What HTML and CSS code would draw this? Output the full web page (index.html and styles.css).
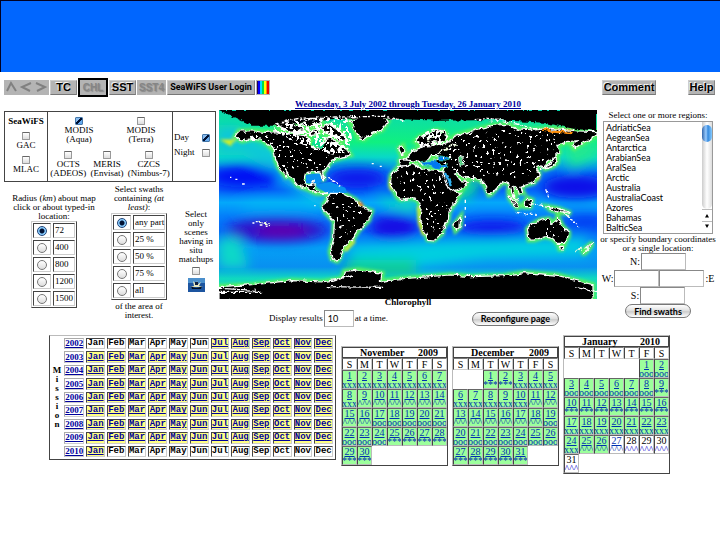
FILE: index.html
```
<!DOCTYPE html>
<html lang="en">
<head>
<meta charset="utf-8">
<title>Ocean color level 1 and 2 browser</title>
<link rel="stylesheet" href="styles.css">
</head>
<body>
<header class="banner"></header>

<nav class="toolbar">
  <div class="arrows">
    <button type="button" class="tool faded" aria-label="Up"><svg viewBox="0 0 14 14"><path d="M3 11 7 3l5 8"/></svg></button>
    <button type="button" class="tool faded" aria-label="Back"><svg viewBox="0 0 14 14"><path d="M12 3 3 7l8 4"/></svg></button>
    <button type="button" class="tool faded" aria-label="Forward"><svg viewBox="0 0 14 14"><path d="M2 3l9 4-8 4"/></svg></button>
  </div>
  <button type="button" class="tool raised wide">TC</button>
  <button type="button" class="tool faded current">CHL</button>
  <button type="button" class="tool raised wide">SST</button>
  <button type="button" class="tool faded wide">SST4</button>
  <button type="button" class="tool login">SeaWiFS User Login</button>
  <button type="button" class="tool rainbow" aria-label="Palette"><span></span></button>
  <button type="button" class="tool raised comment">Comment</button>
  <button type="button" class="tool raised help">Help</button>
</nav>

<form class="main">
  <section class="left">
    <div class="sensors">
      <div class="group seawifs">
        <b>SeaWiFS</b>
        <label><input type="checkbox">GAC</label>
        <label><input type="checkbox">MLAC</label>
      </div>
      <div class="group others">
        <div class="line">
          <label><input type="checkbox" checked>MODIS<br>(Aqua)</label>
          <label><input type="checkbox">MODIS<br>(Terra)</label>
        </div>
        <div class="line">
          <label><input type="checkbox">OCTS<br>(ADEOS)</label>
          <label><input type="checkbox">MERIS<br>(Envisat)</label>
          <label><input type="checkbox">CZCS<br>(Nimbus-7)</label>
        </div>
      </div>
      <div class="group daynight">
        <label>Day<input type="checkbox" checked></label>
        <label>Night<input type="checkbox"></label>
      </div>
    </div>
    <div class="filters">
      <div class="radius">
        <p>Radius (<i>km</i>) about map click or about typed-in location:</p>
        <div class="choices">
          <label><span><input type="radio" name="radius" checked></span><span>72</span></label>
          <label><span><input type="radio" name="radius"></span><span>400</span></label>
          <label><span><input type="radio" name="radius"></span><span>800</span></label>
          <label><span><input type="radio" name="radius"></span><span>1200</span></label>
          <label><span><input type="radio" name="radius"></span><span>1500</span></label>
        </div>
      </div>
      <div class="coverage">
        <p>Select swaths containing <i>(at least)</i>:</p>
        <div class="choices">
          <label><span><input type="radio" name="part" checked></span><span>any part</span></label>
          <label><span><input type="radio" name="part"></span><span>25 %</span></label>
          <label><span><input type="radio" name="part"></span><span>50 %</span></label>
          <label><span><input type="radio" name="part"></span><span>75 %</span></label>
          <label><span><input type="radio" name="part"></span><span>all</span></label>
        </div>
        <p>of the area of interest.</p>
      </div>
      <div class="matchups">
        <label>Select only scenes having in situ matchups<input type="checkbox"></label>
        <svg class="buoy" viewBox="0 0 17 14"><rect width="17" height="14" fill="#1d55a0"/><rect width="17" height="5" fill="#4b8fcc"/><path d="M3 8q5 4 11 0l-1 3H4z" fill="#05101f"/><path d="M5 3l3 3 1-3 1 3 3-2-2 4 4 1H2l4-1z" fill="#e8e8c0"/><path d="M7 4h3v3H7z" fill="#102040"/></svg>
      </div>
    </div>
  </section>

  <section class="center">
    <a class="period" href="#">Wednesday, 3 July 2002 through Tuesday, 26 January 2010</a>
    <svg class="map" viewBox="12 15 1131 567" preserveAspectRatio="none" role="img" aria-label="Chlorophyll map">
      <defs>
        <linearGradient id="sea" x1="0" y1="0" x2="0" y2="1">
          <stop offset="0" stop-color="#0bd8b0"/><stop offset=".17" stop-color="#10f080"/>
          <stop offset=".25" stop-color="#08d8c8"/><stop offset=".33" stop-color="#0478f4"/>
          <stop offset=".42" stop-color="#0460f8"/><stop offset=".49" stop-color="#04a8fa"/>
          <stop offset=".56" stop-color="#0480fa"/><stop offset=".64" stop-color="#0468f8"/>
          <stop offset=".73" stop-color="#04a0f6"/><stop offset=".83" stop-color="#0890f0"/>
          <stop offset=".89" stop-color="#10d8c0"/><stop offset="1" stop-color="#20e0a0"/>
        </linearGradient>
        <filter id="soft" x="-30%" y="-50%" width="160%" height="200%"><feGaussianBlur stdDeviation="17"/></filter>
        <filter id="glow"><feGaussianBlur stdDeviation="5"/></filter>
        <filter id="rough" x="-5%" y="-5%" width="110%" height="110%">
          <feTurbulence type="fractalNoise" baseFrequency=".06" numOctaves="3" seed="4"/>
          <feDisplacementMap in="SourceGraphic" scale="16" xChannelSelector="R" yChannelSelector="G"/>
        </filter>
        <filter id="lakes" x="0" y="0" width="100%" height="100%">
          <feTurbulence type="fractalNoise" baseFrequency=".1" numOctaves="2" seed="8"/>
          <feColorMatrix values="0 0 0 0 1  0 0 0 0 1  0 0 0 0 1  30 0 0 0 -20"/>
          <feComposite in2="SourceGraphic" operator="in"/>
        </filter>
        <filter id="ice" x="0" y="0" width="100%" height="100%">
          <feTurbulence type="fractalNoise" baseFrequency=".09" numOctaves="2" seed="3"/>
          <feColorMatrix values="0 0 0 0 1  0 0 0 0 1  0 0 0 0 1  30 0 0 0 -16"/>
          <feComposite in2="SourceGraphic" operator="in"/>
        </filter>
        <g id="land">
          <path d="M60 95 72 78l38 0 40 4 35-2 45 8 40 4 15 13-3 15 18 8 18 2 7-10 5-20 15-5 15 15 15 8 20 17 10 15-20 5-35 10-10 13-10 17-8 8 4 24-7-10-4-16-18-2-25 4-5 18 8 20 12 0 10-13-2 23 10 7 10 6 22-4-4 6-30-2-26-12-29-10-20-25-18-24 6 27-24-32-10-23-5-27-20-22-18-14-30-2-28 8z"/>
          <path d="M402 48l40-12 60-1 16 13-18 26-30 11-25 17-16-5-10-23z"/>
          <path d="M345 265l37 0 38 20 12 20 36 13-8 27-20 20-10 10-20 30-15 10-15 20-8 25-7 8-15-6-5-22 10-40 2-50-27-30-5-20 10-15z"/>
          <path d="M190 62l30-8 30 8 20 15-40 5zM255 55l30-10 40-5-15 18-30 5zM315 65l30-5 35 22 12 22-20 4-22-20-25-8zM278 78l25-5 10 12-25 4z"/>
          <path d="M550 130l12-8 6 20-10 10zM552 168l22-8 12 6-6 16-22 2z"/>
          <path d="M525 240 527 210 550 185 595 178 610 190 645 195 680 197 690 220 705 255 735 262 720 290 700 320 698 345 683 370 680 385 655 405 637 403 623 365 613 340 617 310 607 285 585 278 555 283 545 275z"/>
          <path d="M565 165l25-25 40-20 35 2 38-12 14-16 25-8 55-16 40-10 40-2 30 14 50 3 50-5 80 8 56 2v10l-28 16-15 8-25 16-6-8 16-15-30 3-35 12 10 20-15 15-20 10-10 20-15-7-10 7 10 20-15 25-25 8-15 7 8 17-16 0-2-12-15-10 5 30 10 18-20-26-5-27-17-7-18 17-18 20-7 3-15-33-15-15-25-2-20-3-18-12-7 2 15 20 20 3-10 17-40 13-10-23-12-30 5-15-3-10-35 0 3-15 17-5-3-10-22 0-10 15-10 10-20-7-15-3z"/>
          <path d="M600 110l12-14 30-12 20-8 28 8 5 20-25 8-15-2-15 16-22-4z"/>
          <path d="M935 372l15-14 25-13 25-3 10 13 10-7 5-13 15 30 18 17-1 13-12 20-20 0-15-15-25-5-30 10-15 0zM1030 424l12 0-4 8-6 0zM735 335l-2 30-13 12-5-17zM920 300l15-20 13 5-5 20-18 0zM880 270l30 35-5 4-24-30zM995 305l30 5 40 15-30-2-30-8zM1130 412l-8 14-10 2zM1120 430l-14 14-8 2zM1012 155l12 0 0 16-12 12-22 8 0-6 16-8z"/>
          <path d="M12 545l100-6 118-12 90 4 60-10 8-22 42-4 70 10-5 25 55-8 65-5 90-7 60 5 100-3 60-9 100 8 50 14 56 14v50H12z"/>
        </g>
      </defs>
      <rect x="12" y="15" width="1131" height="567" fill="url(#sea)"/>
      <g filter="url(#soft)">
        <path d="M0 60h70l110 80v60L80 150H0z" fill="#08c8d8"/>
        <ellipse cx="90" cy="215" rx="110" ry="32" fill="#0610f4"/>
        <ellipse cx="425" cy="220" rx="90" ry="30" fill="#0818ec"/>
        <ellipse cx="185" cy="375" rx="150" ry="34" fill="#3008c8"/>
        <ellipse cx="200" cy="380" rx="80" ry="14" fill="#6c04a0"/>
        <ellipse cx="535" cy="365" rx="75" ry="36" fill="#1410e4"/>
        <ellipse cx="830" cy="368" rx="105" ry="24" fill="#0818ec"/>
        <ellipse cx="1080" cy="245" rx="100" ry="34" fill="#0c08e8"/>
        <ellipse cx="1110" cy="350" rx="70" ry="15" fill="#0428f0"/>
        <path d="M120 292h200v18H60z" fill="#04c0f0"/>
        <path d="M12 400h60l30 90H12z" fill="#08d8c8"/>
        <path d="M400 430l130-10 200-10 380-10v50l-300 10-200 25H420z" fill="#04d0e0"/>
        <path d="M480 270l60 20 60-10v40l-80-15z" fill="#08e8b0"/>
        <path d="M700 240l80-20 20 20-60 50z" fill="#08e890"/>
        <path d="M1050 110h93v40l-80 40z" fill="#20e890"/>
        <path d="M400 465h200v45H380z" fill="#10d090"/>
        <path d="M160 110l70 100 100 60-10 40-120-80z" fill="#08c0e8"/>
      </g>
      <g filter="url(#glow)"><use href="#land" fill="none" stroke="#58f060" stroke-width="15"/>
        <path d="M60 108l-30 0 20 12M418 408l-28 30M608 305l4 50 12 35M526 220l0 35M955 195l15 30" fill="none" stroke="#d8f020" stroke-width="9"/>
        <path d="M980 80h90M430 290l12 15M635 100l-5 24" stroke="#ff7010" stroke-width="10"/></g>
      <path d="M272 210l40-5 10 20-12 12-38-2zM300 240l45-10 45 18 5 16-60 2z" fill="#0890f0"/>
      <g filter="url(#rough)"><use href="#land" stroke="#fff" stroke-width="3.6"/>
        <path d="M12 15h1131v62l-70-6-90-18-140-8-170 2-200-8-180 5-90 18-90 0-12-4z"/>
        <path d="M180 58l70-18 110-4 150-2 60 14M780 40l90 8 80 22 100 8M320 212l60 30M900 322l40 6 20 0M990 250l5 25M940 295l60 10M1030 310l65 60" fill="none" stroke="#fff" stroke-width="4" stroke-dasharray="14 5 6 4"/>
        <path d="M615 170l40-4 20 12 20 2-4 10-30 0-35-12zM668 152l34 6-8 8-26-2z" fill="#0478f0" stroke="#50f0b0" stroke-width="2"/>
        <path d="M688 204l18 36" stroke="#30b0f0" stroke-width="7"/>
        <path d="M728 154l14 0-4 12 8 14-12 6-4-14z" fill="#50d080" stroke="#fff" stroke-width="2"/>
        <path d="M286 112l30-10 16 20-18 8-10-6z" fill="#10e090"/>
        <path d="M980 74l30 6 60 4" fill="none" stroke="#ff9010" stroke-width="7"/>
        <path d="M635 124l8-24 26-14M670 140l50-22M1075 440l22-10M130 350l35 8" fill="none" stroke="#f0ffe0" stroke-width="5" stroke-dasharray="12 4"/>
        <path d="M12 562h130M12 550l110 6M330 545l170 2M350 530l60-20M1075 545l68 18" fill="none" stroke="#fff" stroke-width="4"/>
      </g>
      <path filter="url(#lakes)" d="M80 82h200l115 50-60 65-130-5-50-80zM340 280h95l10 50-70 100-20-80zM540 195l130 10 30 80-30 100-30 0-20-100-60-10zM650 120l130-45h270l-80 130-90 20-60-20-50 30-80-50zM950 360h70l25 30-30 20z"/>
      <path filter="url(#ice)" d="M175 60l110-22 110 0 15 60-20 62-70-20-80-30-60-30zM600 100l50-30 50 15-5 30-80 15z"/>
      <path d="M45 215h4m12 6h6m14 14h8m23 117h6m4-4h6m6 10h8m10 4h5m140-62h4m168-126h6m18 8h6m210 110h4m36-10v10m0 12v8m0 18v6m0 20v6" transform="translate(0 2)" stroke="#fff" stroke-width="4" fill="none"/>
    </svg>
    <b class="caption">Chlorophyll</b>
    <div class="controls">
      <label>Display results<input class="field" type="text" value="10">at a time.</label>
      <button type="button" class="pill">Reconfigure page</button>
    </div>
  </section>

  <section class="right">
    <label for="regions">Select one or more regions:</label>
    <div class="listbox">
      <select id="regions" multiple size="11">
        <option>AdriaticSea</option><option>AegeanSea</option><option>Antarctica</option><option>ArabianSea</option><option>AralSea</option><option>Arctic</option><option>Australia</option><option>AustraliaCoast</option><option>Azores</option><option>Bahamas</option><option>BalticSea</option>
      </select>
      <div class="bar"><div class="track"><div class="thumb"></div></div>
        <svg viewBox="0 0 10 24"><path d="M0 .5h10M0 12.500h10" stroke="#bbb"/><path d="M5 5l2 3.500H3zM5 19l2-3.500H3z"/></svg></div>
    </div>
    <p>or specify boundary coordinates<br>or a single location:</p>
    <div class="coords"><label>N:<input class="field" type="text"></label></div>
    <div class="coords"><label>W:<input class="field" type="text"></label><label><input class="field" type="text">:E</label></div>
    <div class="coords"><label>S:<input class="field" type="text"></label></div>
    <button type="button" class="pill">Find swaths</button>
  </section>
</form>

<section class="dates">
  <table class="mission" id="mission"></table>
  <div class="calendars" id="calendars"></div>
</section>
<script src="calendar.js"></script>
</body>
</html>
```
FILE: styles.css
```
* { box-sizing: border-box; }
body { margin: 0; background: #fff; color: #000; font: 9px/9px "Liberation Serif", serif; }
p { margin: 0; }
a { color: #00009c; }
button, input, select { font: inherit; margin: 0; padding: 0; color: inherit; }

.banner { height: 72px; background: #06f; border-top: 1px solid #002; border-left: 1px solid #002; }

.toolbar { display: flex; align-items: center; gap: 1px; height: 20px; margin: 5px 0 1px; padding: 0 5px 0 4px; }
.arrows { display: flex; }
.tool { height: 15px; border: 0; background: #b4b4b4; font: bold 11px/13px "Liberation Sans", sans-serif; white-space: nowrap; }
.arrows .tool { width: 15px; }
.arrows svg { display: block; width: 14px; height: 14px; fill: none; stroke: #808080; stroke-width: 2; }
.raised { border: 1px solid; border-color: #ccc #888 #777 #ccc; text-shadow: -1px -1px 0 #f4f4f4; }
.wide { width: 27px; }
.faded { color: #858585; text-shadow: 1px 1px 1px #888; }
.faded.wide { font-size: 10px; width: 29px; }
.current { width: 30px; height: 19px; border: 2px solid #000; font-size: 10px; }
.login { width: 88px; border: 1px solid; border-color: #ccc #888 #777 #ccc; font: bold 9px/13px Roboto, sans-serif; }
.rainbow { width: 14px; padding: 1px; }
.rainbow span { display: block; height: 13px; background: linear-gradient(90deg, #205 0 10%, #00f 10% 28%, #0df 28% 42%, #0d4 42% 56%, #ff0 56% 72%, #f80 72% 84%, #e00 84%); }
.comment { width: 54px; margin-left: auto; }
.help { width: 27px; margin-left: 31px; }

.main { display: grid; grid-template-columns: 212px 1fr 116px; column-gap: 3px; padding: 0 4px; }

input[type="checkbox"], input[type="radio"] { appearance: none; flex: none; width: 8px; height: 8px; border: 1px solid #999; border-top-color: #666; border-radius: 1px; background: linear-gradient(#fff, #ddd); }
input[type="checkbox"]:checked { border-color: #47a; background: linear-gradient(135deg, #8be 40%, #013 40% 62%, #6ae 62%); }
input[type="radio"] { width: 10px; height: 10px; border-radius: 50%; border-color: #777; }
input[type="radio"]:checked { border-color: #247; background: radial-gradient(circle, #013 0 2px, #8cf 3px); }

.left { padding-top: 13px; }
.sensors { display: flex; height: 71px; border: 1px solid #444; }
.group { display: flex; flex-direction: column; }
.group + .group { border-left: 1px solid #444; }
.seawifs { width: 42px; padding-top: 5px; gap: 6px; align-items: center; }
.group label { display: flex; flex-direction: column; align-items: center; text-align: center; }
.seawifs label { gap: 1px; }
.others { flex: 1; padding-top: 5px; gap: 7px; }
.line { display: flex; justify-content: space-around; }
.line label { gap: 1px; }
.daynight { width: 43px; padding: 21px 5px 0 1px; gap: 6px; }
.daynight label { flex-direction: row; justify-content: space-between; }

.filters { display: flex; text-align: center; }
.radius { width: 98px; padding: 12px 6px 0 8px; }
.coverage { width: 74px; padding: 3px 6px 0; }
.radius p, .coverage p { margin: 0 -4px; }
.coverage p + .choices { margin: 1px auto 2px; }
.matchups { flex: 1; display: flex; flex-direction: column; align-items: center; padding: 28px 0 0; gap: 3px; }
.matchups label { display: flex; flex-direction: column; align-items: center; gap: 3px; }
.buoy { width: 17px; height: 14px; }
.choices { display: grid; width: 46px; margin: 0 auto; border: 1px solid; border-color: #ccc #444 #444 #ccc; padding: 1px; gap: 2px; }
.coverage .choices { width: 56px; }
.choices label { display: flex; gap: 2px; }
.choices span { display: flex; align-items: center; justify-content: center; width: 18px; height: 15px; border: 1px solid; border-color: #444 #ccc #ccc #444; }
.choices span + span { flex: 1; justify-content: flex-start; padding-left: 1px; white-space: nowrap; }

.center { display: flex; flex-direction: column; align-items: center; min-width: 0; }
.period { font-weight: bold; line-height: 12px; white-space: nowrap; }
.map { display: block; width: 100%; height: 189px; background: #000; }
.caption { line-height: 7px; }
.controls { align-self: stretch; display: flex; align-items: center; justify-content: space-between; padding: 4px 38px 0 50px; }
.controls label { display: flex; align-items: center; gap: 1px; }
.field { border: 1px solid; border-color: #888 #bbb #bbb #888; background: #fff; }
.controls .field { width: 30px; height: 17px; padding-left: 3px; font: 9px/12px Lato, sans-serif; }
.pill { height: 14px; border: 1px solid #777; border-radius: 7px; padding: 0 8px; background: linear-gradient(#fff, #ddd 50%, #ccc 55%, #fff); font: bold 9px/11px Lato, sans-serif; }

.right { display: flex; flex-direction: column; align-items: center; padding-top: 13px; text-align: center; white-space: nowrap; }
.listbox { display: flex; width: 110px; height: 113px; margin: 1px 0; border: 1px solid #999; }
.listbox select { flex: 1; min-width: 0; height: 111px; border: 0; outline: 0; overflow: hidden; scrollbar-width: none; background: #fff; font: 9px/10px Lato, sans-serif; }
.listbox option { min-height: 0; height: 10px; padding: 0 2px; line-height: 10px; }
.bar { display: flex; flex-direction: column; width: 10px; }
.track { flex: 1; padding-top: 3px; background: linear-gradient(90deg, #ccc, #fff 50%, #ddd); border-radius: 0 0 5px 5px; }
.thumb { height: 17px; border-radius: 5px; background: linear-gradient(90deg, #36a, #9cf 40%, #38d 60%, #8cf); }
.bar svg { width: 10px; height: 24px; }
.coords { display: flex; }
.coords label { display: flex; align-items: center; gap: 1px; font-size: 10px; }
.coords .field { width: 45px; height: 17px; }

.dates { display: flex; padding: 8px 53px 0 49px; gap: 5px; }
table { border: 1px solid; border-color: #bbb #444 #444 #bbb; border-spacing: 2px; }
td, th { padding: 0; text-align: center; }
.mission { flex: none; width: 287px; height: 125px; border-left-color: #444; }
.mission td, .mission .year { border: 1px solid; border-color: #444 #ccc #ccc #444; line-height: 9px; }
.mission td { width: 19px; font: bold 9px/9px "Liberation Mono", monospace; }
.mission .year { width: 20px; border-color: #aaa #ccc #ccc #aaa; }
.side { width: 11px; line-height: 9px; }
.mission .on { background: #ffff84; }
.calendars { flex: 1; display: flex; align-items: flex-start; gap: 4px; margin-top: 11px; }
.cal { flex: 1; table-layout: fixed; border-spacing: 0; }
.cal:last-child { margin-top: -11px; }
.cal .title th { height: 11px; border: 1px solid #444; font-size: 10px; line-height: 9px; }
.cal .title div { display: flex; justify-content: space-between; padding: 0 8px 0 17px; }
.cal .days th { height: 12px; border: 1px solid; border-color: #777 #ccc #ccc #444; font-weight: normal; font-size: 10px; line-height: 9px; }
.cal td { height: 19px; font-size: 10px; line-height: 9px; }
.cal .day { border: 1px solid; border-color: #666 #bbb #bbb #444; overflow: hidden; }
.cal .day a, .cal .day span { display: block; margin: 0 -1px; line-height: 9px; }
.cal .day small { display: block; height: 8px; font: 10px/9px "Liberation Serif", serif; }
.cal span small { color: #00c; }
.cal .on { background: #9cff9c; }
.cal .day a { color: #0030b0; }
```
FILE: calendar.js
```
const monthNames = ["Jan", "Feb", "Mar", "Apr", "May", "Jun", "Jul", "Aug", "Sep", "Oct", "Nov", "Dec"];
let rows = "";
for (let year = 2002; year <= 2010; year++) {
  rows += "<tr>";
  if (year === 2002) rows += '<th class="side" rowspan="9">M<br>i<br>s<br>s<br>i<br>o<br>n</th>';
  rows += `<th class="year"><a href="#">${year}</a></th>`;
  monthNames.forEach((name, m) => {
    const on = (year > 2002 || m >= 6) && (year < 2010 || m === 0);
    rows += on ? `<td class="on"><a href="#">${name}</a></td>` : `<td>${name}</td>`;
  });
  rows += "</tr>";
}
document.getElementById("mission").innerHTML = rows;

// Each mark string has one letter per day, starting on weekday "first" (0 = Sunday).
const months = [
  { name: "November", year: 2009, first: 0, marks: "xxxxxxxx^^^^^^^^oooooooo******" },
  { name: "December", year: 2009, first: 2, marks: "**xxxxxxxx^^^^^^^^oooooooo*****" },
  { name: "January", year: 2010, first: 5, marks: "oooooooo********xxxxxxxx^^^^^^^", lastOn: 26, lastLink: 27 }
];
document.getElementById("calendars").innerHTML = months.map(m => {
  let html = `<table class="cal"><tr class="title"><th colspan="7"><div><span>${m.name}</span><span>${m.year}</span></div></th></tr><tr class="days">`;
  html += [..."SMTWTFS"].map(d => `<th>${d}</th>`).join("") + "</tr><tr>";
  html += "<td></td>".repeat(m.first);
  [...m.marks].forEach((mark, i) => {
    const day = i + 1;
    if (i && (i + m.first) % 7 === 0) html += "</tr><tr>";
    const on = day <= (m.lastOn || 31);
    const link = day <= (m.lastLink || 31);
    const inner = `${day}<small>${mark.repeat(3)}</small>`;
    html += `<td class="day${on ? " on" : ""}">${link ? `<a href="#">${inner}</a>` : `<span>${inner}</span>`}</td>`;
  });
  return html + "</tr></table>";
}).join("");
```
